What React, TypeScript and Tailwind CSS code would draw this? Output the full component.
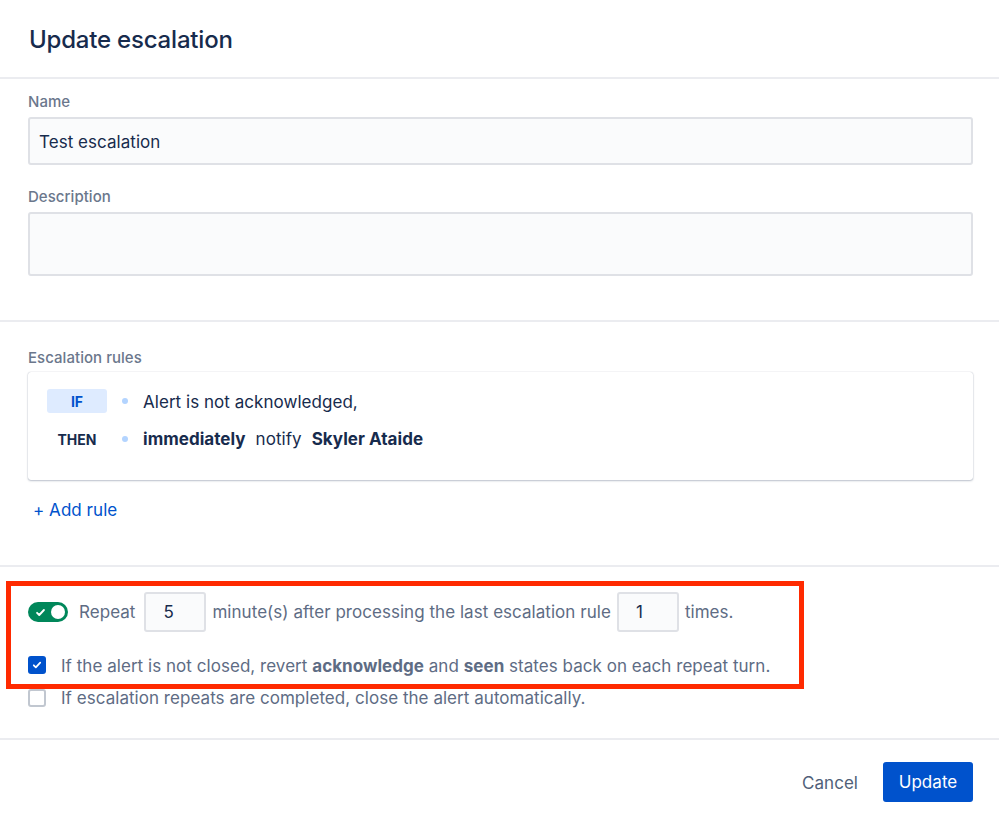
import React from "react";

const font = { fontFamily: "Inter, 'Liberation Sans', sans-serif" };

function Check({ className }: { className?: string }) {
  return (
    <svg viewBox="0 0 24 24" className={className} fill="none">
      <path
        d="M6.5 12.5l3.5 3.5 7.5-8"
        stroke="currentColor"
        strokeWidth="3"
        strokeLinecap="round"
        strokeLinejoin="round"
      />
    </svg>
  );
}

function Toggle() {
  return (
    <div className="relative flex h-[20px] w-[40px] shrink-0 items-center rounded-full bg-[#00875A] px-[3px]">
      <Check className="ml-[2px] h-[15px] w-[15px] text-white" />
      <span className="absolute right-[3px] top-[3px] h-[14px] w-[14px] rounded-full bg-white" />
    </div>
  );
}

function SmallInput({ value }: { value: string }) {
  return (
    <div className="flex h-[40px] w-[62px] shrink-0 items-center rounded-[3px] border-2 border-[#DFE1E6] bg-[#FAFBFC] pl-[17px] pt-[2px] text-[17px] text-[#172B4D]">
      {value}
    </div>
  );
}

export default function App() {
  return (
    <div className="min-h-[821px] w-full bg-white text-[#172B4D] tracking-[0.04px]" style={font}>
      {/* Header */}
      <div className="flex h-[79px] items-center border-b-2 border-[#EBECF0] pl-[29px] pt-[3px]">
        <h1 className="text-[24px] font-medium leading-[28px] tracking-[-0.2px] text-[#172B4D]">
          Update escalation
        </h1>
      </div>

      {/* Name + description */}
      <div className="border-b-2 border-[#EBECF0] pl-7 pr-[26px] pt-[13px] pb-[44px]">
        <label className="block text-[15px] font-medium leading-[20px] text-[#6B778C]">Name</label>
        <div className="mt-[5px] flex h-[48px] items-center rounded-[3px] border-2 border-[#DFE1E6] bg-[#FAFBFC] pl-[9px] pt-[3px] text-[17px]">
          Test escalation
        </div>
        <label className="mt-[22px] block text-[15px] font-medium leading-[20px] text-[#6B778C]">
          Description
        </label>
        <div className="mt-[5px] h-[64px] rounded-[3px] border-2 border-[#DFE1E6] bg-[#FAFBFC]" />
      </div>

      {/* Rules */}
      <div className="border-b-2 border-[#EBECF0] pl-7 pr-[26px] pt-[26px] pb-[43px]">
        <label className="block text-[15px] font-medium leading-[20px] text-[#6B778C]">
          Escalation rules
        </label>
        <div className="mt-[4px] flex h-[108px] flex-col gap-[14px] rounded-[3px] bg-white pl-[19px] pt-[17px] shadow-[0_1px_2px_rgba(9,30,66,0.25),0_0_1px_rgba(9,30,66,0.31)]">
          <div className="flex h-[24px] items-center">
            <span className="flex h-[24px] w-[60px] items-center justify-center rounded-[3px] bg-[#DEEBFF] pt-[1px] text-[14px] font-bold text-[#0052CC]">
              IF
            </span>
            <span className="ml-[15px] h-[6px] w-[6px] rounded-full bg-[#B3D4FF]" />
            <span className="ml-[15px] pt-[3px] text-[17px]">Alert is not acknowledged,</span>
          </div>
          <div className="flex h-[24px] items-center">
            <span className="flex h-[24px] w-[60px] items-center justify-center pt-[1px] text-[14px] font-bold text-[#172B4D]">
              THEN
            </span>
            <span className="ml-[15px] h-[6px] w-[6px] rounded-full bg-[#B3D4FF]" />
            <span className="ml-[15px] pt-[2px] text-[17px]">
              <b className="font-bold">immediately</b>
              <span className="mx-[10px]">notify</span>
              <b className="font-bold">Skyler Ataide</b>
            </span>
          </div>
        </div>
        <button className="mt-[18px] block pl-[5px] text-[17px] leading-[24px] text-[#0052CC]">+ Add rule</button>
      </div>

      {/* Repeat options */}
      <div className="relative border-b-2 border-[#EBECF0] pl-7 pr-[26px] pt-[25px] pb-[28px] text-[17px] text-[#5E6C84]">
        <div className="flex h-[40px] items-center">
          <Toggle />
          <span className="ml-[11px] pt-[2px]">Repeat</span>
          <span className="ml-[9px]"><SmallInput value="5" /></span>
          <span className="ml-[6px] pt-[2px]">minute(s) after processing the last escalation rule</span>
          <span className="ml-[6px]"><SmallInput value="1" /></span>
          <span className="ml-[6px] pt-[2px]">times.</span>
        </div>
        <div className="mt-[21px] flex h-[24px] items-center">
          <span className="flex h-[18px] w-[18px] shrink-0 items-center justify-center rounded-[3px] bg-[#0052CC]">
            <Check className="h-[14px] w-[14px] text-white" />
          </span>
          <span className="ml-[15px] pt-[3px]">
            If the alert is not closed, revert <b className="font-bold">acknowledge</b> and{" "}
            <b className="font-bold">seen</b> states back on each repeat turn.
          </span>
        </div>
        <div className="mt-[9px] flex h-[24px] items-center">
          <span className="h-[18px] w-[18px] shrink-0 rounded-[3px] border-2 border-[#C1C7D0] bg-white" />
          <span className="ml-[15px] pt-[2px]">If escalation repeats are completed, close the alert automatically.</span>
        </div>

        {/* highlight annotation */}
        <div className="pointer-events-none absolute left-[6px] top-[14px] h-[108px] w-[798px] border-[5px] border-[#FF2A00]" />
      </div>

      {/* Footer */}
      <div className="flex items-center justify-end gap-[13px] pr-[26px] pt-[22px] pb-[19px]">
        <button className="px-3 pt-[3px] text-[17px] text-[#505F79]">Cancel</button>
        <button className="h-[40px] w-[90px] rounded-[3px] bg-[#0052CC] pt-[2px] text-[17px] text-white">
          Update
        </button>
      </div>
    </div>
  );
}
